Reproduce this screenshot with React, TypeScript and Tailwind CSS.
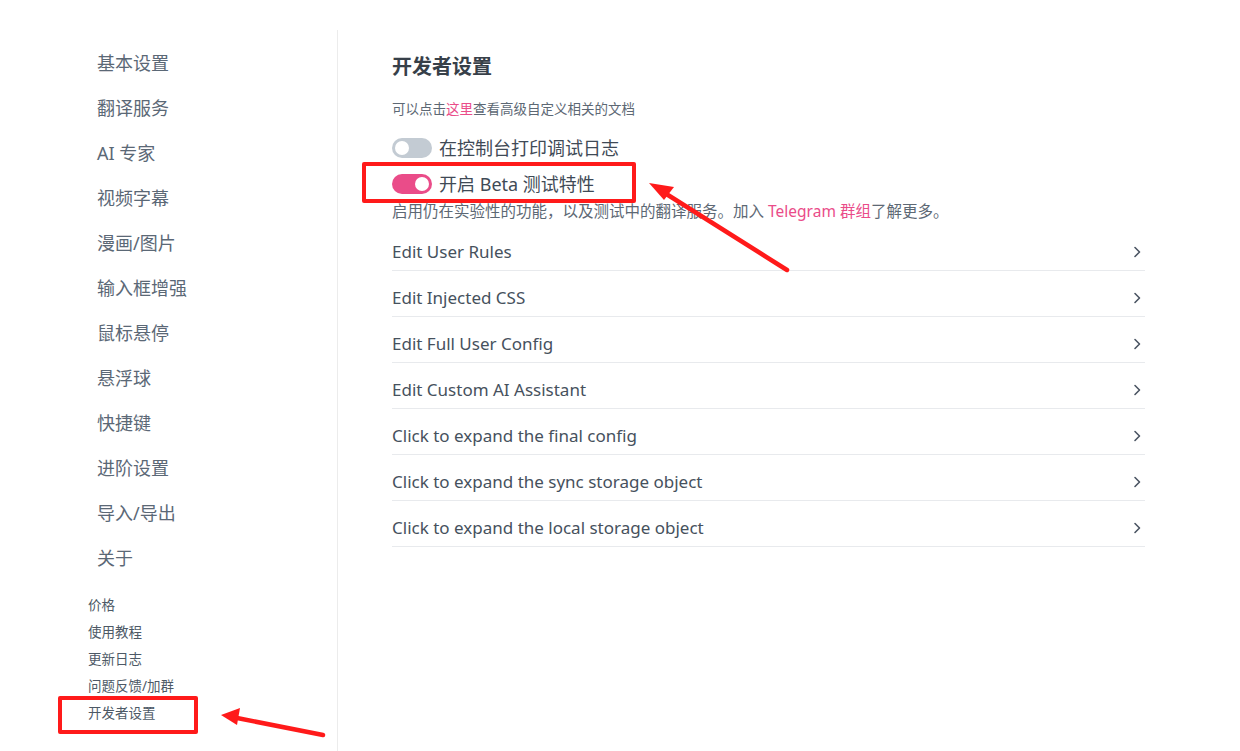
import React from "react";

const navMain = ["基本设置", "翻译服务", "AI 专家", "视频字幕", "漫画/图片", "输入框增强", "鼠标悬停", "悬浮球", "快捷键", "进阶设置", "导入/导出", "关于"];
const navSmall = ["价格", "使用教程", "更新日志", "问题反馈/加群", "开发者设置"];
const rows = [
  "Edit User Rules",
  "Edit Injected CSS",
  "Edit Full User Config",
  "Edit Custom AI Assistant",
  "Click to expand the final config",
  "Click to expand the sync storage object",
  "Click to expand the local storage object",
];

const font = { fontFamily: '"Noto Sans", "Noto Sans CJK SC", sans-serif' };

function Toggle({ on }: { on: boolean }) {
  return (
    <div className={`relative h-[20px] w-[40px] rounded-full ${on ? "bg-[#ea4c89]" : "bg-[#c3cbd3]"}`}>
      <div className={`absolute top-[3px] h-[14px] w-[14px] rounded-full bg-white ${on ? "left-[23px]" : "left-[3px]"}`} />
    </div>
  );
}

function Chevron() {
  return (
    <svg width="10" height="12" viewBox="0 0 10 12" fill="none" stroke="#4b5563" strokeWidth="1.6" strokeLinecap="round" strokeLinejoin="round">
      <path d="M3 1.5 L7.5 6 L3 10.5" />
    </svg>
  );
}

export default function App() {
  return (
    <div className="relative flex h-[751px] w-[1240px] overflow-hidden bg-white text-[#4a5562]" style={font}>
      <aside className="mt-[30px] flex w-[338px] shrink-0 flex-col border-r border-[#ececec] pt-[11px]">
        <div className="flex flex-col pl-[97px]">
          {navMain.map((t) => (
            <div key={t} className="flex h-[45px] items-center text-[18px] text-[#5b6876]">{t}</div>
          ))}
        </div>
        <div className="mt-[11px] flex flex-col pl-[88px]">
          {navSmall.map((t) => (
            <div key={t} className="flex h-[27px] items-center text-[13.5px] text-[#4d5966]">{t}</div>
          ))}
        </div>
      </aside>
      <main className="flex w-[807px] flex-col pl-[54px] pt-[53px]">
        <h1 className="flex h-[28px] items-center text-[20px] font-bold text-[#374049]">开发者设置</h1>
        <p className="mt-[14px] flex h-[28px] items-center text-[13.5px] text-[#5d6874]">
          可以点击<span className="text-[#ea4c89]">这里</span>查看高级自定义相关的文档
        </p>
        <div className="mt-[7px] flex h-[36px] items-center gap-[7px]">
          <Toggle on={false} />
          <span className="text-[18px] text-[#3f4a56]">在控制台打印调试日志</span>
        </div>
        <div className="flex h-[36px] items-center gap-[7px]">
          <Toggle on={true} />
          <span className="text-[18px] text-[#3f4a56]">开启 Beta 测试特性</span>
        </div>
        <p className="flex h-[19px] items-center whitespace-nowrap text-[15.5px] text-[#5d6874]">
          启用仍在实验性的功能，以及测试中的翻译服务。加入&nbsp;<span className="text-[#ea4c89]">Telegram 群组</span>了解更多。
        </p>
        <div className="mt-[4px] flex flex-col">
          {rows.map((r) => (
            <div key={r} className="flex h-[46px] items-center justify-between border-b border-[#e8eaed] pr-[3px] pt-[8px]">
              <span className="text-[17px] text-[#46515d]">{r}</span>
              <Chevron />
            </div>
          ))}
        </div>
      </main>

      {/* annotations */}
      <div className="absolute left-[362px] top-[162px] h-[41px] w-[274px] rounded-[2px] border-[4px] border-[#ff1a1a]" />
      <div className="absolute left-[58px] top-[696px] h-[38px] w-[140px] rounded-[2px] border-[4px] border-[#ff1a1a]" />
      <svg className="pointer-events-none absolute left-0 top-0" width="1240" height="751">
        <line x1="787" y1="270" x2="660" y2="190" stroke="#ff1a1a" strokeWidth="4.5" strokeLinecap="round" />
        <polygon points="649,183 674,187 664,200" fill="#ff1a1a" />
        <line x1="323" y1="735" x2="232" y2="717" stroke="#ff1a1a" strokeWidth="4.5" strokeLinecap="round" />
        <polygon points="221,715 240,708 237,725" fill="#ff1a1a" />
      </svg>
    </div>
  );
}
